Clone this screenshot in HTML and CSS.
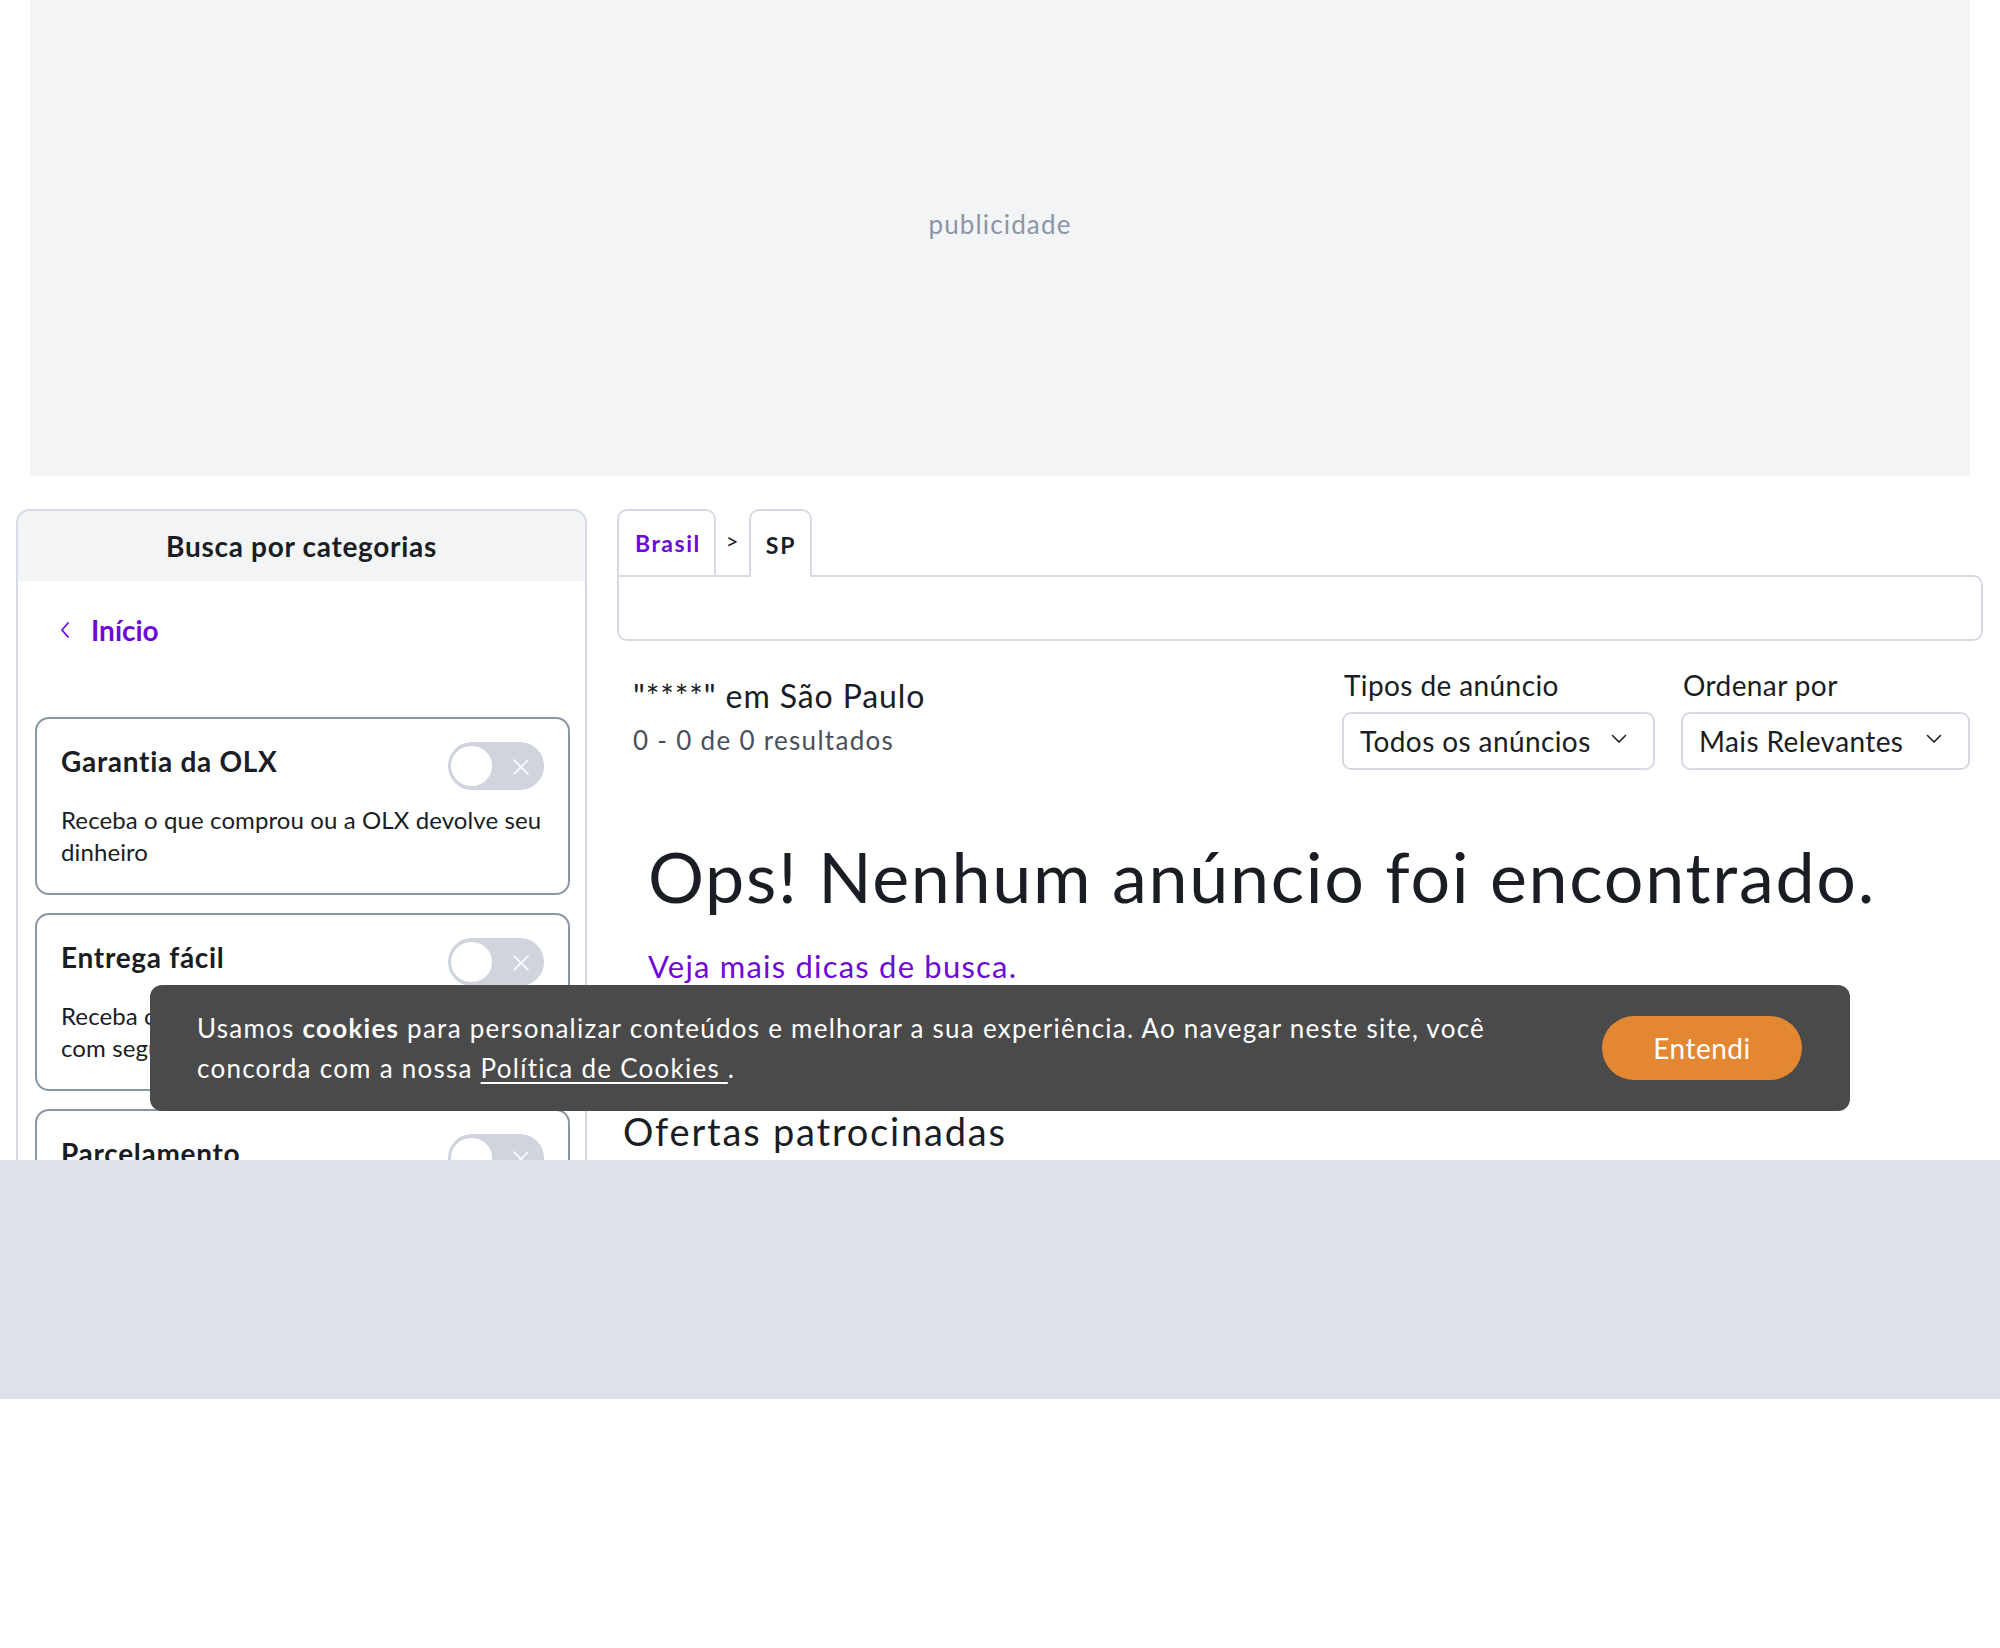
FILE: index.html
```html
<!DOCTYPE html>
<html lang="pt-BR">
<head>
<meta charset="utf-8">
<title>OLX - Busca</title>
<link rel="stylesheet" href="styles.css">
</head>
<body>
<div class="ad"><span class="ad-label">publicidade</span></div>

<div class="layout">
  <aside class="sidebar">
    <div class="sidebar-head">Busca por categorias</div>
    <a class="back-link" href="#">
      <svg class="back-icon" width="12" height="18" viewBox="0 0 12 18"><path d="M9 2 L3 9 L9 16" fill="none" stroke="#6e0ad6" stroke-width="1.8" stroke-linecap="round" stroke-linejoin="round"/></svg>
      <span>Início</span>
    </a>
    <div class="filters">
      <div class="filter-card">
        <div class="filter-top">
          <span class="filter-title">Garantia da OLX</span>
          <span class="toggle"><span class="knob"></span><svg class="toggle-x" width="16" height="16" viewBox="0 0 16 16"><path d="M1 1 L15 15 M15 1 L1 15" stroke="#fff" stroke-width="1.6" stroke-linecap="round"/></svg></span>
        </div>
        <p class="filter-desc">Receba o que comprou ou a OLX devolve seu dinheiro</p>
      </div>
      <div class="filter-card">
        <div class="filter-top">
          <span class="filter-title">Entrega fácil</span>
          <span class="toggle"><span class="knob"></span><svg class="toggle-x" width="16" height="16" viewBox="0 0 16 16"><path d="M1 1 L15 15 M15 1 L1 15" stroke="#fff" stroke-width="1.6" stroke-linecap="round"/></svg></span>
        </div>
        <p class="filter-desc">Receba o produto no conforto da sua casa com segurança</p>
      </div>
      <div class="filter-card">
        <div class="filter-top">
          <span class="filter-title">Parcelamento</span>
          <span class="toggle"><span class="knob"></span><svg class="toggle-x" width="16" height="16" viewBox="0 0 16 16"><path d="M1 1 L15 15 M15 1 L1 15" stroke="#fff" stroke-width="1.6" stroke-linecap="round"/></svg></span>
        </div>
        <p class="filter-desc">Compre parcelado em até 12x no cartão</p>
      </div>
    </div>
  </aside>

  <main class="main">
    <nav class="tabs">
      <a class="tab tab-link" href="#">Brasil</a>
      <span class="tab-sep">&gt;</span>
      <span class="tab tab-active">SP</span>
    </nav>
    <div class="tab-box"></div>

    <div class="results-head">
      <div class="results-info">
        <h1 class="results-title">"****" em São Paulo</h1>
        <p class="results-count">0 - 0 de 0 resultados</p>
      </div>
      <div class="results-controls">
        <div class="control control-type">
          <span class="control-label">Tipos de anúncio</span>
          <div class="select"><span>Todos os anúncios</span><svg width="16" height="10" viewBox="0 0 16 10"><path d="M1.5 1.5 L8 8 L14.5 1.5" fill="none" stroke="#1a1d23" stroke-width="1.6" stroke-linecap="round" stroke-linejoin="round"/></svg></div>
        </div>
        <div class="control control-order">
          <span class="control-label">Ordenar por</span>
          <div class="select"><span>Mais Relevantes</span><svg width="16" height="10" viewBox="0 0 16 10"><path d="M1.5 1.5 L8 8 L14.5 1.5" fill="none" stroke="#1a1d23" stroke-width="1.6" stroke-linecap="round" stroke-linejoin="round"/></svg></div>
        </div>
      </div>
    </div>

    <div class="empty">
      <h2 class="empty-title">Ops! Nenhum anúncio foi encontrado.</h2>
      <a class="empty-link" href="#">Veja mais dicas de busca.</a>
    </div>

    <h3 class="sponsored">Ofertas patrocinadas</h3>
  </main>
</div>

<footer class="footer-band"></footer>

<div class="cookie-banner">
  <p class="cookie-text">Usamos <strong>cookies</strong> para personalizar conteúdos e melhorar a sua experiência. Ao navegar neste site, você concorda com a nossa <a href="#">Política de Cookies </a>.</p>
  <button class="cookie-btn" type="button">Entendi</button>
</div>
</body>
</html>
```
FILE: styles.css
```css
* { box-sizing: border-box; }

html, body {
  margin: 0;
  padding: 0;
  background: #ffffff;
}

body {
  font-family: Lato, "Noto Sans", "Liberation Sans", sans-serif;
  color: #1a1d23;
  position: relative;
  min-height: 1648px;
}

a { text-decoration: none; }

/* ad */
.ad {
  margin: 0 30px;
  height: 476px;
  background: #f3f4f6;
  display: flex;
  align-items: center;
  justify-content: center;
  padding-bottom: 28px;
}

.ad-label {
  font-size: 26px;
  color: #8c95a8;
  letter-spacing: 1.15px;
}

/* layout */
.layout {
  display: flex;
  gap: 30px;
  padding: 33px 17px 0 16px;
  height: 684px;
  overflow: hidden;
}

/* sidebar */
.sidebar {
  flex: 0 0 571px;
  border: 2px solid #d6dae2;
  border-radius: 14px 14px 0 0;
  border-bottom: 0;
  height: 800px;
}

.sidebar-head {
  height: 70px;
  background: #f3f4f6;
  border-radius: 12px 12px 0 0;
  display: flex;
  align-items: center;
  justify-content: center;
  font-size: 28px;
  font-weight: 700;
  letter-spacing: 0.7px;
  color: #1a1d23;
}

.back-link {
  display: flex;
  align-items: center;
  gap: 20px;
  padding: 30px 0 0 41px;
  height: 68px;
  color: #6e0ad6;
  font-size: 28px;
  font-weight: 700;
  line-height: 38px;
}

.filters {
  display: flex;
  flex-direction: column;
  gap: 18px;
  padding: 68px 15px 0 17px;
}

.filter-card {
  border: 2px solid #8c96a9;
  border-radius: 14px;
  padding: 23px 24px 25px 24px;
}

.filter-top {
  display: flex;
  align-items: center;
  justify-content: space-between;
  height: 48px;
}

.filter-title {
  font-size: 28px;
  font-weight: 700;
  letter-spacing: 0.7px;
  color: #1a1d23;
  margin-top: -11px;
}

.toggle {
  position: relative;
  width: 96px;
  height: 48px;
  border-radius: 24px;
  background: #cfd4dd;
  flex: none;
}

.knob {
  position: absolute;
  left: 3px;
  top: 4px;
  width: 41px;
  height: 40px;
  border-radius: 50%;
  background: #ffffff;
}

.toggle-x {
  position: absolute;
  left: 65px;
  top: 17px;
}

.filter-desc {
  margin: 14px -6px 0 0;
  font-size: 24px;
  line-height: 32px;
  letter-spacing: 0.1px;
  color: #1a1d23;
}

/* main */
.main {
  flex: 1 1 auto;
  min-width: 0;
}

.tabs {
  display: flex;
  align-items: flex-end;
  height: 66px;
}

.tab {
  height: 66px;
  border: 2px solid #d6dae2;
  border-bottom: 0;
  border-radius: 10px 10px 0 0;
  padding: 0 13px 0 16px;
  display: flex;
  align-items: center;
  font-size: 23px;
  font-weight: 700;
  letter-spacing: 1.5px;
}

.tab-link { color: #6e0ad6; }

.tab-sep {
  width: 33px;
  height: 66px;
  display: flex;
  align-items: center;
  justify-content: center;
  font-size: 22px;
  color: #1a1d23;
  padding-bottom: 4px;
}

.tab-active {
  color: #1a1d23;
  background: #ffffff;
  position: relative;
  z-index: 1;
  height: 68px;
  margin-bottom: -2px;
  padding: 2px 13px 0 15px;
  letter-spacing: 2px;
}

.tab-box {
  height: 66px;
  border: 2px solid #d6dae2;
  border-radius: 0 10px 10px 10px;
}

.results-head {
  display: flex;
  justify-content: space-between;
  align-items: flex-start;
  padding: 26px 13px 0 16px;
}

.results-info { padding-top: 9px; }

.results-title {
  margin: 0;
  font-size: 32px;
  line-height: 40px;
  font-weight: 400;
  letter-spacing: 0.9px;
  color: #1a1d23;
}

.results-count {
  margin: 7px 0 0 0;
  font-size: 26px;
  line-height: 34px;
  letter-spacing: 1.3px;
  color: #4a4f5c;
}

.results-controls {
  display: flex;
  gap: 26px;
}

.control {
  display: flex;
  flex-direction: column;
  gap: 9px;
}

.control-type { width: 313px; }
.control-order { width: 289px; }

.control-label {
  font-size: 28px;
  line-height: 36px;
  letter-spacing: 0.4px;
  color: #1a1d23;
  padding-left: 2px;
}

.select {
  height: 58px;
  border: 2px solid #d6dae2;
  border-radius: 9px;
  display: flex;
  align-items: center;
  justify-content: space-between;
  padding: 0 26px 0 16px;
  font-size: 28px;
  letter-spacing: 0.4px;
  color: #1a1d23;
}

.select svg { margin-top: -4px; }

.empty {
  padding: 64px 0 0 31px;
}

.empty-title {
  margin: 0;
  font-size: 70px;
  line-height: 84px;
  font-weight: 400;
  letter-spacing: 1.7px;
  color: #1a1d23;
}

.empty-link {
  display: block;
  margin-top: 28px;
  font-size: 31px;
  line-height: 40px;
  letter-spacing: 1.2px;
  color: #6e0ad6;
}

.sponsored {
  margin: 123px 0 0 6px;
  font-size: 38px;
  line-height: 44px;
  font-weight: 400;
  letter-spacing: 1.8px;
  color: #1a1d23;
}

/* footer */
.footer-band {
  height: 239px;
  background: #dfe1ea;
}

/* cookie banner */
.cookie-banner {
  position: absolute;
  top: 985px;
  left: 150px;
  width: 1700px;
  height: 126px;
  background: #4a4a4a;
  border-radius: 12px;
  display: flex;
  align-items: center;
  justify-content: space-between;
  gap: 60px;
  padding: 0 48px 0 47px;
  z-index: 10;
}

.cookie-text {
  margin: 0;
  flex: 1 1 auto;
  font-size: 26px;
  line-height: 40px;
  letter-spacing: 1.25px;
  color: #ffffff;
}

.cookie-text strong { font-weight: 700; }

.cookie-text a {
  color: #ffffff;
  text-decoration: underline;
  text-underline-offset: 4px;
}

.cookie-btn {
  flex: 0 0 200px;
  height: 64px;
  border: 0;
  border-radius: 32px;
  background: #e48732;
  color: #ffffff;
  font-family: Lato, "Noto Sans", sans-serif;
  font-size: 28px;
  font-weight: 400;
  letter-spacing: 0.5px;
  cursor: pointer;
}
```
